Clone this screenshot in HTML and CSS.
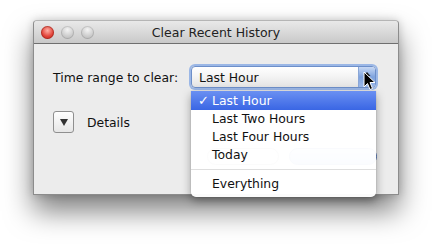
FILE: index.html
```html
<!DOCTYPE html>
<html lang="en">
<head>
    <meta charset="UTF-8">
    <title>Clear Recent History</title>
    <link rel="stylesheet" href="styles.css">
</head>
<body>

    <div class="window">
        <div class="titlebar">
            <div class="lights">
                <span class="light red"></span>
                <span class="light"></span>
                <span class="light"></span>
            </div>
            <div class="title">Clear Recent History</div>
            <div></div>
        </div>

        <div class="content">
            <div class="row">
                <label class="label">Time range to clear:</label>
                <div class="select">
                    <span class="select-text">Last Hour</span>
                    <span class="stepper">
                        <svg width="8" height="13" viewBox="0 0 8 13">
                            <path d="M4 1 L7.5 5 L0.5 5 Z" fill="#1a1a1a"/>
                            <path d="M4 12 L7.5 8 L0.5 8 Z" fill="#1a1a1a"/>
                        </svg>
                    </span>
                </div>
            </div>

            <div class="row details-row">
                <span class="disclosure">
                    <svg width="8" height="7" viewBox="0 0 8 7">
                        <path d="M0 0 L8 0 L4 7 Z" fill="#333"/>
                    </svg>
                </span>
                <span class="details">Details</span>
            </div>

            <!-- buttons sit behind the open menu -->
            <div class="footer">
                <span class="button"></span>
                <span class="button default"></span>
            </div>
        </div>

        <!-- open popup menu -->
        <div class="menu">
            <div class="item selected"><span class="check">✓</span>Last Hour</div>
            <div class="item">Last Two Hours</div>
            <div class="item">Last Four Hours</div>
            <div class="item">Today</div>
            <div class="separator"></div>
            <div class="item">Everything</div>
        </div>

        <svg class="cursor" width="13" height="20" viewBox="0 0 13 20">
            <path d="M1 1 L1 16 L4.5 12.5 L7 18.5 L9.5 17.5 L7 11.5 L12 11.5 Z" fill="#000" stroke="#fff" stroke-width="1"/>
        </svg>
    </div>

</body>
</html>
```

FILE: styles.css
```css
html, body {
    height: 100%;
}
body {
    font-family: "DejaVu Sans", "Liberation Sans", sans-serif;
    font-size: 12.4px;
    color: #111;
    background-color: #fff;
    margin: 0;
    padding: 0;
    min-height: 245px;
}
.window {
    position: relative;
    margin: 20px 0 0 33px;
    width: 364px;
    height: 173px;
    background-color: #ececec;
    border: 1px solid #8c8c8c;
    border-top-color: #b5b5b5;
    border-radius: 4px 4px 0 0;
    box-shadow: 0 16px 28px rgba(0, 0, 0, 0.5), 0 0 8px rgba(0, 0, 0, 0.18);
}
.titlebar {
    display: grid;
    grid-template-columns: 1fr auto 1fr;
    align-items: center;
    height: 22px;
    background: linear-gradient(#e9e9e9, #c9c9c9);
    border-bottom: 1px solid #6f6f6f;
    border-radius: 4px 4px 0 0;
}
.lights {
    display: flex;
    gap: 7px;
    padding-left: 7px;
}
.light {
    width: 13px;
    height: 13px;
    border-radius: 50%;
    background: radial-gradient(circle at 50% 30%, #f4f4f4, #c4c4c4 70%, #b0b0b0);
    box-shadow: inset 0 0 0 1px rgba(0, 0, 0, 0.12);
}
.light.red {
    background: radial-gradient(circle at 50% 35%, #ffb0a6, #e2443a 55%, #b0231b);
    box-shadow: inset 0 0 0 1px rgba(120, 20, 10, 0.4);
}
.title {
    font-size: 12.5px;
    color: #222;
}
.content {
    padding: 22px 21px 0 19px;
}
.row {
    display: flex;
    align-items: center;
}
.label {
    width: 138px;
}
.select {
    display: flex;
    align-items: center;
    width: 183px;
    height: 20px;
    border: 1px solid #6d8fc9;
    border-radius: 4px;
    background: linear-gradient(#fff, #f3f3f3 50%, #e3e3e3);
    box-shadow: 0 0 0 2px #9bb7e6;
    overflow: hidden;
}
.select-text {
    flex: 1;
    padding-left: 7px;
}
.stepper {
    display: flex;
    align-items: center;
    justify-content: center;
    width: 16px;
    height: 100%;
    background: linear-gradient(#c7d8f4, #7fa3de 50%, #9cb9ea);
    border-left: 1px solid #8aa6d6;
}
.details-row {
    margin-top: 23px;
}
.disclosure {
    display: flex;
    align-items: center;
    justify-content: center;
    width: 19px;
    height: 20px;
    border: 1px solid #8f8f8f;
    border-radius: 3px;
    background: linear-gradient(#fff, #e6e6e6);
}
.details {
    margin-left: 13px;
}
.footer {
    display: flex;
    justify-content: flex-end;
    gap: 10px;
    margin-top: 15px;
}
.button {
    width: 70px;
    height: 15px;
    border: 1px solid #8a8a8a;
    border-radius: 9px;
    background: linear-gradient(#fff, #e4e4e4);
}
.button.default {
    width: 86px;
    border-color: #4a6fb3;
    background: linear-gradient(#c8daf6, #6d99e0);
}
.menu {
    position: absolute;
    left: 157px;
    top: 70px;
    width: 185px;
    padding-bottom: 4px;
    background-color: rgba(255, 255, 255, 0.97);
    border-radius: 0 0 5px 5px;
    box-shadow: 0 4px 10px rgba(0, 0, 0, 0.35), 0 0 1px rgba(0, 0, 0, 0.4);
}
.item {
    height: 18px;
    line-height: 18px;
    padding-left: 21px;
    position: relative;
}
.item.selected {
    height: 19px;
    line-height: 19px;
    color: #fff;
    background: linear-gradient(#6a90f2, #3a66e4);
}
.check {
    position: absolute;
    left: 7px;
    font-size: 13px;
    font-weight: bold;
}
.separator {
    height: 1px;
    margin: 5px 0;
    background-color: #dedede;
}
.cursor {
    position: absolute;
    left: 329px;
    top: 50px;
}
```
